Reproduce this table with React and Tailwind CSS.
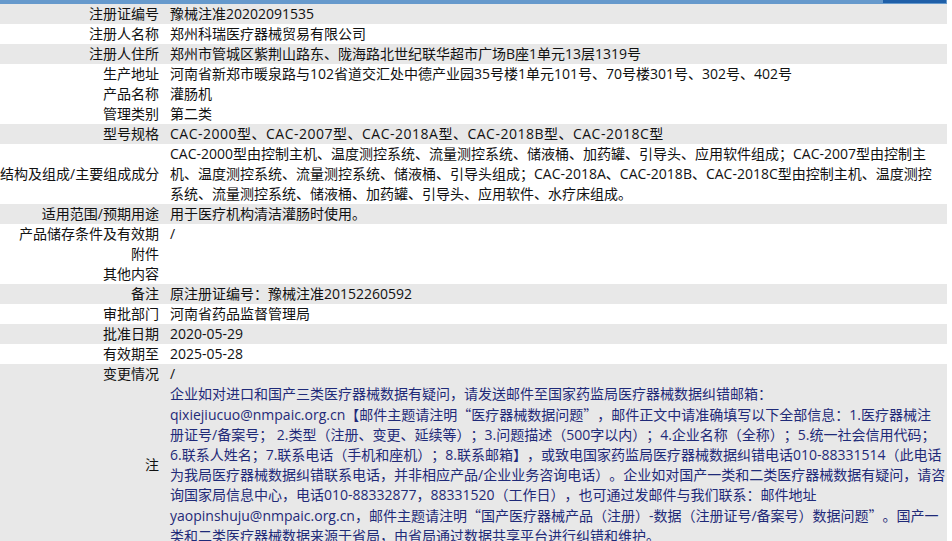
import React from 'react'

const rows = [
  { label: '注册证编号', value: '豫械注准20202091535', gray: true },
  { label: '注册人名称', value: '郑州科瑞医疗器械贸易有限公司' },
  { label: '注册人住所', value: '郑州市管城区紫荆山路东、陇海路北世纪联华超市广场B座1单元13层1319号', gray: true },
  { label: '生产地址', value: '河南省新郑市暖泉路与102省道交汇处中德产业园35号楼1单元101号、70号楼301号、302号、402号' },
  { label: '产品名称', value: '灌肠机' },
  { label: '管理类别', value: '第二类' },
  { label: '型号规格', value: 'CAC-2000型、CAC-2007型、CAC-2018A型、CAC-2018B型、CAC-2018C型', gray: true, wide: true },
  {
    label: '结构及组成/主要组成成分',
    lines: [
      'CAC-2000型由控制主机、温度测控系统、流量测控系统、储液桶、加药罐、引导头、应用软件组成；CAC-2007型由控制主',
      '机、温度测控系统、流量测控系统、储液桶、引导头组成；CAC-2018A、CAC-2018B、CAC-2018C型由控制主机、温度测控',
      '系统、流量测控系统、储液桶、加药罐、引导头、应用软件、水疗床组成。',
    ],
  },
  { label: '适用范围/预期用途', value: '用于医疗机构清洁灌肠时使用。', gray: true },
  { label: '产品储存条件及有效期', value: '/' },
  { label: '附件', value: '' },
  { label: '其他内容', value: '' },
  { label: '备注', value: '原注册证编号：豫械注准20152260592', gray: true },
  { label: '审批部门', value: '河南省药品监督管理局' },
  { label: '批准日期', value: '2020-05-29', gray: true },
  { label: '有效期至', value: '2025-05-28' },
  { label: '变更情况', value: '/', gray: true },
  {
    label: '注',
    gray: true,
    note: true,
    lines: [
      '企业如对进口和国产三类医疗器械数据有疑问，请发送邮件至国家药监局医疗器械数据纠错邮箱：',
      'qixiejiucuo@nmpaic.org.cn【邮件主题请注明“医疗器械数据问题”，邮件正文中请准确填写以下全部信息：1.医疗器械注',
      '册证号/备案号； 2.类型（注册、变更、延续等）；3.问题描述（500字以内）；4.企业名称（全称）；5.统一社会信用代码；',
      '6.联系人姓名；7.联系电话（手机和座机）；8.联系邮箱】，或致电国家药监局医疗器械数据纠错电话010-88331514（此电话',
      '为我局医疗器械数据纠错联系电话，并非相应产品/企业业务咨询电话）。企业如对国产一类和二类医疗器械数据有疑问，请咨',
      '询国家局信息中心，电话010-88332877，88331520（工作日），也可通过发邮件与我们联系：邮件地址',
      'yaopinshuju@nmpaic.org.cn，邮件主题请注明“国产医疗器械产品（注册）-数据（注册证号/备案号）数据问题”。国产一',
      '类和二类医疗器械数据来源于省局，由省局通过数据共享平台进行纠错和维护。',
    ],
  },
]

// 引号用中文字体显示成全角
function Text({ children }) {
  const parts = String(children).split(/([“”])/)
  return parts.map((p, i) =>
    p === '“' || p === '”' ? (
      <span key={i} className="font-['Noto_Sans_CJK_SC']">{p}</span>
    ) : (
      <React.Fragment key={i}>{p}</React.Fragment>
    )
  )
}

export default function App() {
  return (
    <div
      className="w-[947px] text-[14px] leading-[20px] text-[#111] [text-spacing-trim:space-all]"
      style={{ fontFamily: '"Open Sans", "Noto Sans CJK SC", sans-serif' }}
    >
      {/* 顶部蓝条 */}
      <div className="flex h-[4px] bg-[#6699cc]">
        <div className="ml-[883px] h-[3px] w-[63px] bg-[#1f5fa8]" />
      </div>

      {rows.map((row) => (
        <div
          key={row.label}
          className={`flex items-center min-h-[20px] ${row.gray ? 'bg-[#e8e8e8]' : 'bg-white'}`}
        >
          <div className="w-[166px] shrink-0 pr-[7px] text-right whitespace-nowrap">{row.label}</div>
          <div
            className={`flex-1 pl-[4px] ${row.note ? 'text-[#1f2a78]' : ''} ${row.wide ? 'tracking-[0.5px]' : ''}`}
          >
            {row.lines
              ? row.lines.map((line, i) => (
                  <div key={i} className="whitespace-nowrap">
                    <Text>{line}</Text>
                  </div>
                ))
              : row.value}
          </div>
        </div>
      ))}
    </div>
  )
}
